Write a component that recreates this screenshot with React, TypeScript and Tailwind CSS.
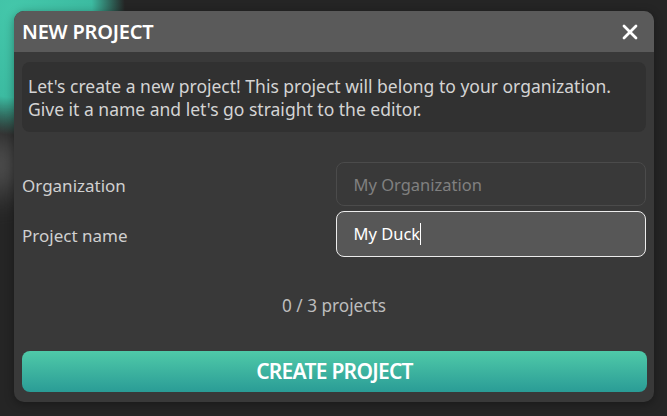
import { X } from "lucide-react";

const App = () => {
  return (
    <div
      className="relative w-[667px] h-[416px] overflow-hidden bg-[#252525]"
      style={{ fontFamily: '"Noto Sans", "Open Sans", sans-serif' }}
    >
      {/* Blurred teal shape behind the dialog */}
      <div className="absolute inset-0 bg-[radial-gradient(ellipse_110px_125px_at_15px_10px,#44c7aa_0%,#3cbba1_70%,rgba(37,37,37,0)_100%)]" />
      <div className="absolute -left-[20px] top-[135px] w-[40px] h-[60px] rounded-full bg-[#6a6a6a] blur-lg opacity-70" />

      <div className="relative pl-[14px] pt-[11px]">
        <div className="w-[640px] h-[391px] rounded-[10px] overflow-hidden bg-[#393939] shadow-[0_2px_10px_rgba(0,0,0,0.35)] flex flex-col">
          {/* Header */}
          <div className="h-[41px] shrink-0 bg-[#5a5a5a] flex items-center justify-between pl-2 pr-[12px]">
            <h2 className="text-[20px] font-semibold text-white tracking-[-0.01em]">
              NEW PROJECT
            </h2>
            <button className="text-white">
              <X size={24} strokeWidth={2.75} />
            </button>
          </div>

          {/* Body */}
          <div className="flex-1 flex flex-col px-2 pt-[10px] pb-2">
            <div className="h-[70px] rounded-[8px] bg-[#313131] px-1.5 pt-[1px] flex flex-col justify-center">
              <p className="text-[17.5px] leading-[23px] text-[#d4d4d4]">
                Let's create a new project! This project will belong to your organization.
                <br />
                Give it a name and let's go straight to the editor.
              </p>
            </div>

            <div className="mt-[30px] flex flex-col gap-[5px]">
              <div className="flex items-center">
                <label className="w-[315px] pt-[3px] text-[17px] text-[#d0d0d0]">Organization</label>
                <input
                  className="w-[310px] h-[44px] rounded-[8px] border border-[#4b4b4b] bg-[#393939] px-4 text-[16.5px] text-white placeholder:text-[#808080] outline-none"
                  placeholder="My Organization"
                />
              </div>
              <div className="flex items-center">
                <label className="w-[315px] pt-[3px] text-[17px] text-[#d0d0d0]">Project name</label>
                <div className="w-[310px] h-[46px] rounded-[8px] border-[1.5px] border-[#ececec] bg-[#575757] px-4 flex items-center">
                  <span className="text-[16.5px] text-white">My Duck</span>
                  <span className="w-px h-[22px] bg-white" />
                </div>
              </div>
            </div>

            <div className="h-[94px] pt-[3px] flex items-center justify-center">
              <span className="text-[17.2px] text-[#bdbdbd]">0 / 3 projects</span>
            </div>

            <button className="h-[41px] w-[625px] rounded-[8px] bg-gradient-to-b from-[#4fcaa8] to-[#2a9c96] text-[21px] font-semibold text-white tracking-[-0.035em]">
              CREATE PROJECT
            </button>
          </div>
        </div>
      </div>
    </div>
  );
};

export default App;
